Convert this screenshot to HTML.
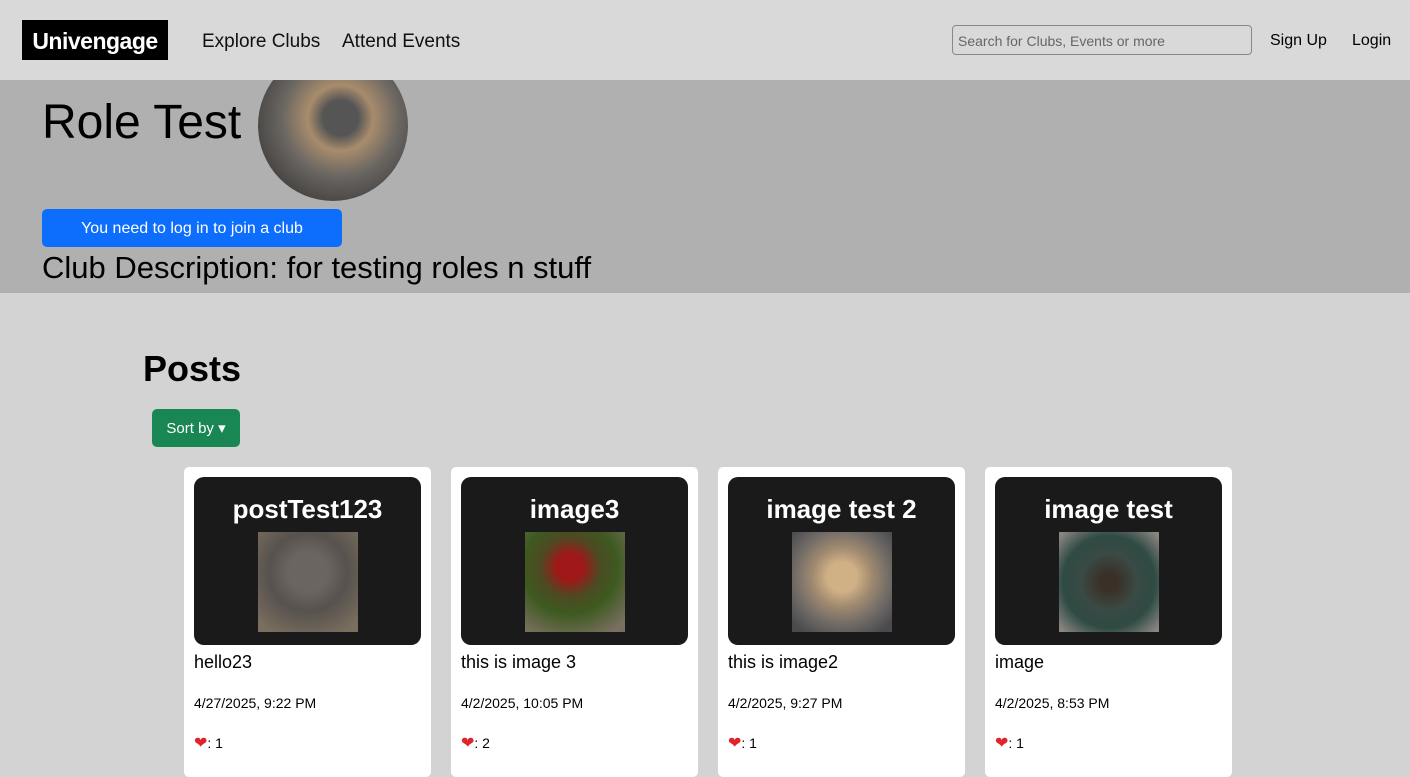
<!DOCTYPE html>
<html><head><style>
*{box-sizing:border-box;margin:0;padding:0}
body{width:1410px;height:772px;overflow:hidden;background:#d3d3d3;font-family:"Liberation Sans",sans-serif;color:#000;position:relative}
.nav{position:absolute;left:0;top:0;width:1410px;height:80px;background:#d9d9d9}
.logo{position:absolute;left:22px;top:20px;width:146px;height:40px;background:#000;color:#fff;font-size:23px;line-height:42px;text-align:center;font-weight:bold;letter-spacing:-0.5px}
.nl{position:absolute;top:31px;font-size:19px;color:#111}
.search{position:absolute;left:952px;top:25px;width:300px;height:30px;border:1px solid #888;border-radius:4px;background:#d9d9d9;font-size:14px;color:#666;padding:7px 5px}
.nr{position:absolute;top:32px;font-size:16px}
.hero{position:absolute;left:0;top:80px;width:1410px;height:213px;background:#b0b0b0;overflow:hidden}
h1{position:absolute;left:42px;top:15px;font-size:48px;font-weight:normal}
.av{position:absolute;left:258px;top:-30px;width:150px;height:151px;border-radius:50%;background:radial-gradient(circle at 55% 45%,#555 0 15%,#a88c6c 28%,#6a6662 50%,#3f3d3b 80%)}
.join{position:absolute;left:42px;top:129px;width:300px;height:38px;background:#0d6efd;border-radius:5px;color:#fff;font-size:16px;line-height:40px;text-align:center}
.desc{position:absolute;left:42px;top:170px;font-size:31px;letter-spacing:0px}
.posts{position:absolute;left:143px;top:348px;font-size:36px;font-weight:bold}
.sort{position:absolute;left:152px;top:409px;width:88px;height:38px;background:#198754;border-radius:5px;color:#fff;font-size:15px;line-height:40px;text-align:center}
.card{position:absolute;top:467px;width:247px;height:310px;background:#fff;border-radius:5px}
.box{position:absolute;left:10px;top:10px;width:227px;height:168px;background:#1a1a1a;border-radius:10px}
.box h3{color:#fff;text-align:center;font-size:26px;margin-top:17px;line-height:30px}
.img{position:absolute;left:64px;top:55px;width:100px;height:100px}
.t{position:absolute;left:10px;top:185px;font-size:18px}
.d{position:absolute;left:10px;top:228px;font-size:14px}
.h{position:absolute;left:10px;top:266px;font-size:14px}
.h span{color:#e0242d;font-size:16px}
</style></head><body>
<div class="nav">
<div class="logo">Univengage</div>
<div class="nl" style="left:202px">Explore Clubs</div>
<div class="nl" style="left:342px">Attend Events</div>
<div class="search">Search for Clubs, Events or more</div>
<div class="nr" style="left:1270px">Sign Up</div>
<div class="nr" style="left:1352px">Login</div>
</div>
<div class="hero">
<h1>Role Test</h1>
<div class="av"></div>
<div class="join">You need to log in to join a club</div>
<div class="desc">Club Description: for testing roles n stuff</div>
</div>
<div class="posts">Posts</div>
<div class="sort">Sort by ▾</div>

<div class="card" style="left:184px"><div class="box"><h3>postTest123</h3><div class="img" style="background:radial-gradient(circle at 50% 40%,#6a6560 0 25%,#57524e 50%,#7a6e5e 90%)"></div></div><div class="t">hello23</div><div class="d">4/27/2025, 9:22 PM</div><div class="h"><span>❤</span>: 1</div></div>
<div class="card" style="left:451px"><div class="box"><h3>image3</h3><div class="img" style="background:radial-gradient(circle at 45% 35%,#a01818 0 15%,#4d4a22 35%,#3d5a20 55%,#7a6f60 90%)"></div></div><div class="t">this is image 3</div><div class="d">4/2/2025, 10:05 PM</div><div class="h"><span>❤</span>: 2</div></div>
<div class="card" style="left:718px"><div class="box"><h3>image test 2</h3><div class="img" style="background:radial-gradient(circle at 50% 45%,#d0b085 0 20%,#a08a70 40%,#6f6a66 65%,#4a4a4e 90%)"></div></div><div class="t">this is image2</div><div class="d">4/2/2025, 9:27 PM</div><div class="h"><span>❤</span>: 1</div></div>
<div class="card" style="left:985px"><div class="box"><h3>image test</h3><div class="img" style="background:radial-gradient(circle at 50% 50%,#3a3028 0 12%,#3a4a44 40%,#2f4a44 65%,#8a8580 95%)"></div></div><div class="t">image</div><div class="d">4/2/2025, 8:53 PM</div><div class="h"><span>❤</span>: 1</div></div>
</body></html>
